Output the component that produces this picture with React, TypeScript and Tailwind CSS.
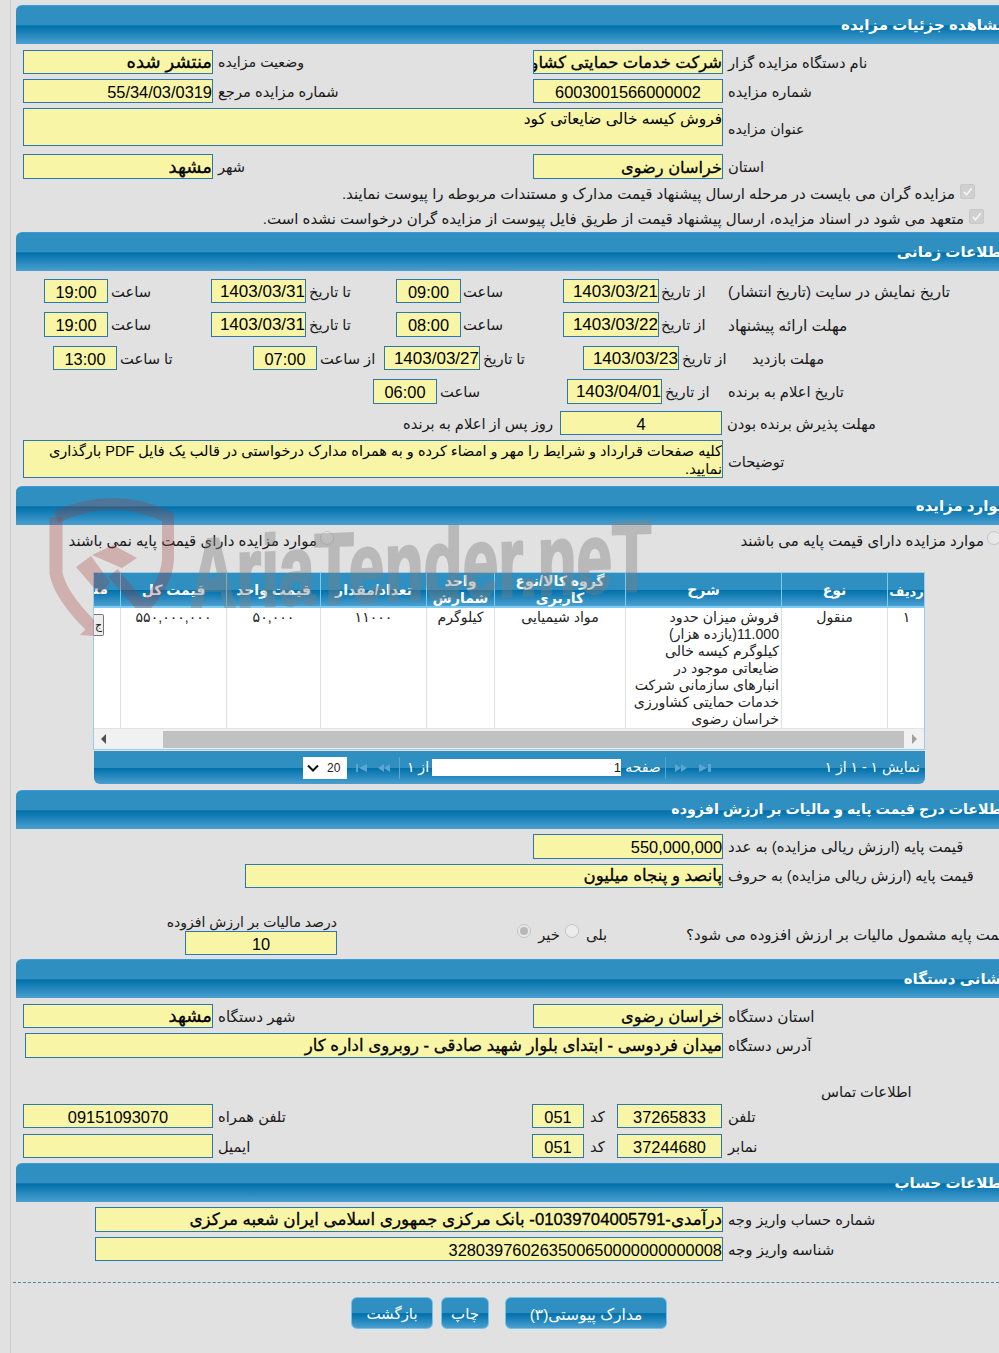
import React from "react";

const grad = "bg-[linear-gradient(#2f8fc0_0%,#2f8fc0_50%,#0070aa_52%,#4a9fd0_100%)]";
const thick = "[-webkit-text-stroke:0.3px_#000] !pt-0";

function Box({ className = "", children, top = false, center = false }: { className?: string; children?: React.ReactNode; top?: boolean; center?: boolean }) {
  return (
    <div dir="rtl" className={`shrink-0 border border-[#2a78ae] bg-[#f8f6a6] text-black text-[16.4px] leading-[22px] pt-[1px] overflow-hidden whitespace-nowrap ${center ? "text-center" : "text-right"} ${top ? "" : "flex items-center " + (center ? "justify-center" : "")} ${className}`}>
      {children}
    </div>
  );
}

function Lab({ className = "", children }: { className?: string; children?: React.ReactNode }) {
  return (
    <div className={`shrink-0 text-left text-[14.7px] text-[#1a1a1a] whitespace-nowrap pt-[2px] ${className}`}>
      <span dir="rtl" className="inline-block">{children}</span>
    </div>
  );
}

function Row({ className = "", children }: { className?: string; children?: React.ReactNode }) {
  return <div className={`flex items-center ${className}`}>{children}</div>;
}

function Head({ title, className = "" }: { title: string; className?: string }) {
  return (
    <div dir="rtl" className={`relative h-[39px] ml-[5px] -mr-[8px] rounded-tl-[6px] border-t border-[#3b9ade] ${grad} text-white font-bold text-[15px] leading-[37px] whitespace-nowrap overflow-hidden ${className}`}>
      {title}
    </div>
  );
}

function Tick({ className = "" }: { className?: string }) {
  return (
    <span className={`inline-flex w-[15px] h-[15px] rounded-[2px] bg-[#d0d0d0] border border-[#c8c8c8] items-center justify-center ${className}`}>
      <svg viewBox="0 0 12 12" className="w-[11px] h-[11px]"><path d="M2 6.5 L5 9.5 L10.5 2.5" stroke="#f4f4f4" strokeWidth="2" fill="none" /></svg>
    </span>
  );
}

function Radio({ className = "", dot = false }: { className?: string; dot?: boolean }) {
  return (
    <span className={`inline-flex shrink-0 w-[14px] h-[14px] rounded-full border border-[#c4c4c4] bg-[#e8e8e8] items-center justify-center ${className}`}>
      {dot && <span className="w-[8px] h-[8px] rounded-full bg-[#b8b8b8]" />}
    </span>
  );
}

function Watermark() {
  return (
    <div className="absolute left-[29px] top-[495px] w-[640px] h-[150px] z-10 pointer-events-none">
      <svg viewBox="0 0 150 150" className="absolute left-0 top-0 w-[150px] h-[150px]">
        <path d="M16 22 Q73 -4 128 22 L128 65 Q126 90 103 113 L73 78" fill="none" stroke="#9a3a3a" strokeOpacity="0.3" strokeWidth="12" />
        <path d="M16 22 L16 78 Q20 100 50 130" fill="none" stroke="#a83a3a" strokeOpacity="0.3" strokeWidth="13" />
        <path d="M40 140 L67 142 L62 117 Z" fill="#a83a3a" fillOpacity="0.3" />
        <path d="M36 72 L51 61 L70 87 L60 100 Z" fill="#a83a3a" fillOpacity="0.3" />
        <path d="M52 60 L73 50 L97 63 L82 73 Z" fill="#a83a3a" fillOpacity="0.3" />
      </svg>
      <div className="absolute left-[150px] top-[24px] text-[100px] leading-[110px] font-bold text-[#808080] opacity-40 whitespace-nowrap origin-left [-webkit-text-stroke:3px_#808080] [transform:scaleX(.64)_skewY(-1.5deg)] [font-family:'Liberation_Sans',sans-serif]">
        AriaTender.neT
      </div>
    </div>
  );
}

const cols = ["w-[27px]", "w-[106px]", "w-[94px]", "w-[106px]", "w-[68px]", "w-[131px]", "w-[156px]", "w-[106px]", "w-[37px]"];
const heads = ["مشاهده", "قیمت کل", "قیمت واحد", "تعداد/مقدار", "واحد شمارش", "گروه کالا/نوع کاربری", "شرح", "نوع", "ردیف"];
const desc = ["فروش میزان حدود", "11.000(یازده هزار)", "کیلوگرم کیسه خالی", "ضایعاتی موجود در", "انبارهای سازمانی شرکت", "خدمات حمایتی کشاورزی", "خراسان رضوی"];

function Table() {
  return (
    <div className="relative ml-[82px] w-[832px] mt-[20px] border border-[#9ccbe8] border-b-0">
      <div className={`flex h-[35px] ${grad} border-b-2 border-[#7ccbf0]`}>
        {heads.map((h, i) => (
          <div key={i} dir="rtl" className={`${cols[i]} shrink-0 ${i < 8 ? "border-r border-[#7ccbf0]" : ""} flex items-center text-white font-bold leading-[17px] ${i === 0 ? "justify-start pr-[12px] whitespace-nowrap overflow-hidden text-[14px]" : i === 8 ? "justify-center pt-[3px] text-[13px]" : "justify-center text-center pt-[1px] text-[14px]"}`}>
            {h}
          </div>
        ))}
      </div>
      <div className="relative z-20 flex h-[120px] bg-white text-[14.1px] leading-[17px] text-[#222] text-center">
        <div className={`${cols[0]} shrink-0 border-r border-[#dfdfdf] pt-[6px]`}>
          <span className="block w-[10px] h-[22px] bg-[#eee] border border-[#777] border-l-0 rounded-r-[2px] text-[11px] leading-[20px]">ج</span>
        </div>
        <div dir="rtl" className={`${cols[1]} shrink-0 border-r border-[#dfdfdf] pt-[1px]`}>۵۵۰,۰۰۰,۰۰۰</div>
        <div dir="rtl" className={`${cols[2]} shrink-0 border-r border-[#dfdfdf] pt-[1px]`}>۵۰,۰۰۰</div>
        <div dir="rtl" className={`${cols[3]} shrink-0 border-r border-[#dfdfdf] pt-[1px]`}>۱۱۰۰۰</div>
        <div dir="rtl" className={`${cols[4]} shrink-0 border-r border-[#dfdfdf] pt-[1px]`}>کیلوگرم</div>
        <div dir="rtl" className={`${cols[5]} shrink-0 border-r border-[#dfdfdf] pt-[1px]`}>مواد شیمیایی</div>
        <div dir="rtl" className={`${cols[6]} shrink-0 border-r border-[#dfdfdf] pt-[1px] pr-[2px] text-right whitespace-nowrap`}>
          {desc.map((l) => <div key={l}>{l}</div>)}
        </div>
        <div dir="rtl" className={`${cols[7]} shrink-0 border-r border-[#dfdfdf] pt-[1px]`}>منقول</div>
        <div dir="rtl" className={`${cols[8]} shrink-0 pt-[1px]`}>۱</div>
      </div>
      <div className="relative z-20 h-[22px] bg-[#f1f1f1] border-t border-[#e2e2e2] border-b border-b-[#9ccbe8] flex items-center">
        <span className="ml-[7px] w-0 h-0 border-y-[5px] border-y-transparent border-r-[5px] border-r-[#505050]" />
        <div className="ml-[57px] w-[741px] h-[17px] bg-[#c1c1c1]" />
        <span className="ml-[8px] w-0 h-0 border-y-[5px] border-y-transparent border-l-[5px] border-l-[#a0a0a0]" />
      </div>
    </div>
  );
}

function PagerIcon({ d }: { d: string }) {
  return (
    <svg viewBox="0 0 14 10" className="w-[14px] h-[10px]"><path d={d} fill="#5ba5cf" /></svg>
  );
}

function Pager() {
  return (
    <div className={`relative ml-[83px] w-[831px] h-[33px] mt-[1px] rounded-b-[6px] ${grad} flex items-center text-white text-[14px]`}>
      <div className="ml-[209px] w-[44px] h-[22px] bg-white flex items-center text-[#222] text-[12px]">
        <svg viewBox="0 0 12 8" className="ml-[4px] w-[12px] h-[8px]"><path d="M1 1.5 L6 6.5 L11 1.5" stroke="#111" strokeWidth="2" fill="none" /></svg>
        <span className="ml-[8px]">20</span>
      </div>
      <div className="ml-[8px] flex gap-[8px] items-center">
        <PagerIcon d="M1 1 H3 V9 H1 Z M12 1 V9 L4 5 Z" />
        <PagerIcon d="M7 1 V9 L1 5 Z M13 1 V9 L7 5 Z" />
      </div>
      <div className="ml-[8px] w-px h-[22px] bg-[#5ba5cf]" />
      <span dir="rtl" className="ml-[6px] w-[24px] text-center">از ۱</span>
      <div className="ml-[2px] w-[189px] h-[17px] bg-white text-[#222] text-right text-[13px] leading-[17px]">1</div>
      <span dir="rtl" className="ml-[4px] w-[36px] text-center">صفحه</span>
      <div className="ml-[4px] w-px h-[22px] bg-[#5ba5cf]" />
      <div className="ml-[8px] flex gap-[10px] items-center">
        <PagerIcon d="M1 1 V9 L7 5 Z M7 1 V9 L13 5 Z" />
        <PagerIcon d="M1 1 V9 L9 5 Z M10 1 H13 V9 H10 Z" />
      </div>
      <span dir="rtl" className="ml-auto mr-[5px]">نمایش ۱ - ۱ از ۱</span>
    </div>
  );
}

function Btn({ className = "", children }: { className?: string; children?: React.ReactNode }) {
  return (
    <button dir="rtl" className={`h-[32px] pt-[3px] rounded-[6px] border border-[#6fc3ec] ${grad} text-white text-[15px] ${className}`}>{children}</button>
  );
}

export default function App() {
  return (
    <div className="relative w-[999px] h-[1353px] overflow-hidden bg-[#e1e1e1] [font-family:'Liberation_Sans','DejaVu_Sans',sans-serif]">
      <div className="relative ml-[10px] h-full border-l border-[#cccccc] pt-[5px]">
        <Watermark />
        <Head title="مشاهده جزئیات مزایده" />
        <Row className="mt-[6px] h-[24px]">
          <Box className={`ml-[12px] w-[190px] h-[24px] ${thick} !text-[18px]`}>منتشر شده</Box>
          <Lab className="w-[320px] pl-[5px] !text-[14.2px]">وضعیت مزایده</Lab>
          <Box className={`w-[190px] h-[24px] ${thick}`}>شرکت خدمات حمایتی کشاورزی خراسان رضوی</Box>
          <Lab className="pl-[5px]">نام دستگاه مزایده گزار</Lab>
        </Row>
        <Row className="mt-[5px] h-[24px]">
          <Box className="ml-[12px] w-[190px] h-[24px]">55/34/03/0319</Box>
          <Lab className="w-[320px] pl-[5px]">شماره مزایده مرجع</Lab>
          <Box center className="w-[190px] h-[24px]">6003001566000002</Box>
          <Lab className="pl-[5px]">شماره مزایده</Lab>
        </Row>
        <Row className="mt-[5px] h-[38px]">
          <Box top className="ml-[12px] w-[700px] h-[38px] !text-[15.4px] !leading-[20px] !pt-0">فروش کیسه خالی ضایعاتی کود</Box>
          <Lab className="pl-[5px] !pt-[6px] !text-[14.2px]">عنوان مزایده</Lab>
        </Row>
        <Row className="mt-[8px] h-[25px]">
          <Box className={`ml-[12px] w-[190px] h-[25px] ${thick} !text-[18px]`}>مشهد</Box>
          <Lab className="w-[320px] pl-[5px]">شهر</Lab>
          <Box className={`w-[190px] h-[25px] ${thick} !text-[16.2px]`}>خراسان رضوی</Box>
          <Lab className="pl-[5px]">استان</Lab>
        </Row>
        <div dir="rtl" className="mt-[2px] h-[26px] mr-[24px] flex items-center gap-[5px] text-[15px] text-[#1a1a1a] whitespace-nowrap">
          <Tick className="-mt-[6px]" />
          <span>مزایده گران می بایست در مرحله ارسال پیشنهاد قیمت مدارک و مستندات مربوطه را پیوست نمایند.</span>
        </div>
        <div dir="rtl" className="h-[25px] mr-[15px] flex items-center gap-[5px] text-[15px] text-[#1a1a1a] whitespace-nowrap">
          <Tick className="-mt-[6px]" />
          <span>متعهد می شود در اسناد مزایده، ارسال پیشنهاد قیمت از طریق فایل پیوست از مزایده گران درخواست نشده است.</span>
        </div>

        <Head title="اطلاعات زمانی" />
        <Row className="mt-[8px] h-[24px]">
          <Box center className="ml-[33px] w-[64px] h-[24px]">19:00</Box>
          <Lab className="w-[103px] pl-[3px]">ساعت</Lab>
          <Box className="w-[95px] h-[24px] !text-[17px]">1403/03/31</Box>
          <Lab className="w-[90px] pl-[3px]">تا تاریخ</Lab>
          <Box center className="w-[65px] h-[24px]">09:00</Box>
          <Lab className="w-[102px] pl-[2px]">ساعت</Lab>
          <Box className="w-[96px] h-[24px] !text-[17px]">1403/03/21</Box>
          <Lab className="w-[69px] pl-[2px]">از تاریخ</Lab>
          <Lab className="!text-[15.2px]">تاریخ نمایش در سایت (تاریخ انتشار)</Lab>
        </Row>
        <Row className="mt-[9px] h-[25px]">
          <Box center className="ml-[33px] w-[64px] h-[25px]">19:00</Box>
          <Lab className="w-[103px] pl-[3px]">ساعت</Lab>
          <Box className="w-[95px] h-[25px] !text-[17px]">1403/03/31</Box>
          <Lab className="w-[90px] pl-[3px]">تا تاریخ</Lab>
          <Box center className="w-[65px] h-[25px]">08:00</Box>
          <Lab className="w-[102px] pl-[2px]">ساعت</Lab>
          <Box className="w-[96px] h-[25px] !text-[17px]">1403/03/22</Box>
          <Lab className="w-[69px] pl-[2px]">از تاریخ</Lab>
          <Lab className="!text-[15.5px]">مهلت ارائه پیشنهاد</Lab>
        </Row>
        <Row className="mt-[9px] h-[24px]">
          <Box center className="ml-[42px] w-[64px] h-[24px]">13:00</Box>
          <Lab className="w-[136px] pl-[3px]">تا ساعت</Lab>
          <Box center className="w-[64px] h-[24px]">07:00</Box>
          <Lab className="w-[67px] pl-[3px]">از ساعت</Lab>
          <Box className="w-[96px] h-[24px] !text-[17px]">1403/03/27</Box>
          <Lab className="w-[103px] pl-[3px]">تا تاریخ</Lab>
          <Box className="w-[96px] h-[24px] !text-[17px]">1403/03/23</Box>
          <Lab className="w-[73px] pl-[3px]">از تاریخ</Lab>
          <Lab>مهلت بازدید</Lab>
        </Row>
        <Row className="mt-[9px] h-[25px]">
          <Box center className="ml-[362px] w-[64px] h-[25px]">06:00</Box>
          <Lab className="w-[130px] pl-[3px]">ساعت</Lab>
          <Box className="w-[95px] h-[25px] !text-[17px]">1403/04/01</Box>
          <Lab className="w-[66px] pl-[3px]">از تاریخ</Lab>
          <Lab>تاریخ اعلام به برنده</Lab>
        </Row>
        <Row className="mt-[7px] h-[24px]">
          <Lab className="ml-[392px] w-[157px]">روز پس از اعلام به برنده</Lab>
          <Box center className="w-[162px] h-[24px]">4</Box>
          <Lab className="pl-[5px]">مهلت پذیرش برنده بودن</Lab>
        </Row>
        <Row className="mt-[5px] h-[38px]">
          <Box top className="ml-[12px] w-[700px] h-[38px] !text-[14.5px] !leading-[18px] !whitespace-normal">کلیه صفحات قرارداد و شرایط را مهر و امضاء کرده و به همراه مدارک درخواستی در قالب یک فایل PDF بارگذاری نمایید.</Box>
          <Lab className="pl-[5px] !pt-[6px]">توضیحات</Lab>
        </Row>

        <Head title="موارد مزایده" className="mt-[8px]" />
        <div className="flex h-[22px] mt-[5px] text-[15px] text-[#1a1a1a] whitespace-nowrap">
          <div dir="rtl" className="w-[323px] flex items-center gap-[3px]">
            <Radio className="-mt-[6px]" />
            <span>موارد مزایده دارای قیمت پایه نمی باشند</span>
          </div>
          <div dir="rtl" className="flex-1 -mr-[2px] flex items-center gap-[3px]">
            <Radio className="-mt-[6px]" />
            <span>موارد مزایده دارای قیمت پایه می باشند</span>
          </div>
        </div>
        <Table />
        <Pager />

        <Head title="اطلاعات درج قیمت پایه و مالیات بر ارزش افزوده" className="mt-[6px] !text-[14.2px]" />
        <Row className="mt-[5px] h-[25px]">
          <Box className="ml-[522px] w-[190px] h-[25px]">550,000,000</Box>
          <Lab className="pl-[5px] !text-[14.9px]">قیمت پایه (ارزش ریالی مزایده) به عدد</Lab>
        </Row>
        <Row className="mt-[5px] h-[24px]">
          <Box className={`ml-[234px] w-[478px] h-[24px] ${thick} !text-[16.6px]`}>پانصد و پنجاه میلیون</Box>
          <Lab className="pl-[5px] !text-[14.5px]">قیمت پایه (ارزش ریالی مزایده) به حروف</Lab>
        </Row>
        <div className="flex mt-[26px] h-[40px]">
          <div className="ml-[158px] w-[168px] flex flex-col items-end">
            <span dir="rtl" className="text-[14px] leading-[17px] text-[#1a1a1a] whitespace-nowrap">درصد مالیات بر ارزش افزوده</span>
            <Box center className="w-[152px] h-[24px]">10</Box>
          </div>
          <div className="ml-[180px] w-[169px] shrink-0 mt-[10px] flex items-start gap-[4px] text-[14.7px] text-[#1a1a1a]">
            <Radio dot />
            <span dir="rtl" className="w-[24px] text-center ml-[2px]">خیر</span>
            <Radio className="bg-[#ececec]" />
            <span dir="rtl" className="ml-[3px]">بلی</span>
          </div>
          <Lab className="mt-[8px] !text-[15px]">قیمت پایه مشمول مالیات بر ارزش افزوده می شود؟</Lab>
        </div>

        <Head title="نشانی دستگاه" className="mt-[5px]" />
        <Row className="mt-[6px] h-[24px]">
          <Box className={`ml-[12px] w-[190px] h-[24px] ${thick} !text-[18px]`}>مشهد</Box>
          <Lab className="w-[320px] pl-[5px] !text-[15.2px]">شهر دستگاه</Lab>
          <Box className={`w-[190px] h-[24px] ${thick} !text-[16.2px]`}>خراسان رضوی</Box>
          <Lab className="pl-[5px] !text-[15.2px]">استان دستگاه</Lab>
        </Row>
        <Row className="mt-[5px] h-[25px]">
          <Box className={`ml-[14px] w-[698px] h-[25px] ${thick} !text-[16.6px]`}>میدان فردوسی - ابتدای بلوار شهید صادقی - روبروی اداره کار</Box>
          <Lab className="pl-[5px]">آدرس دستگاه</Lab>
        </Row>
        <div dir="rtl" className="mt-[23px] h-[20px] text-left pl-[810px] text-[14.7px] text-[#1a1a1a] whitespace-nowrap">اطلاعات تماس</div>
        <Row className="mt-[3px] h-[24px]">
          <Box center className="ml-[12px] w-[190px] h-[24px]">09151093070</Box>
          <Lab className="w-[319px] pl-[5px]">تلفن همراه</Lab>
          <Box center className="w-[52px] h-[24px]">051</Box>
          <Lab className="w-[33px] pl-[6px]">کد</Lab>
          <Box center className="w-[105px] h-[24px]">37265833</Box>
          <Lab className="pl-[6px]">تلفن</Lab>
        </Row>
        <Row className="mt-[6px] h-[24px]">
          <Box className="ml-[12px] w-[190px] h-[24px]" />
          <Lab className="w-[319px] pl-[5px]">ایمیل</Lab>
          <Box center className="w-[52px] h-[24px]">051</Box>
          <Lab className="w-[33px] pl-[6px]">کد</Lab>
          <Box center className="w-[105px] h-[24px]">37244680</Box>
          <Lab className="pl-[6px]">نمابر</Lab>
        </Row>

        <Head title="اطلاعات حساب" className="mt-[5px]" />
        <Row className="mt-[5px] h-[25px]">
          <Box className={`ml-[84px] w-[628px] h-[25px] ${thick} !text-[16.75px]`}>درآمدی-01039704005791- بانک مرکزی جمهوری اسلامی ایران شعبه مرکزی</Box>
          <Lab className="pl-[5px]">شماره حساب واریز وجه</Lab>
        </Row>
        <Row className="mt-[5px] h-[24px]">
          <Box className="ml-[84px] w-[628px] h-[24px]">328039760263500650000000000008</Box>
          <Lab className="pl-[5px] !text-[15px]">شناسه واریز وجه</Lab>
        </Row>
        <div className="mt-[21px] ml-[2px] border-t border-dashed border-[#4a88a8]" />
        <div className="mt-[14px] ml-[340px] flex gap-[8px]">
          <Btn className="w-[82px]">بازگشت</Btn>
          <Btn className="w-[48px]">چاپ</Btn>
          <Btn className="w-[162px] ml-[8px] !text-[15.5px]">مدارک پیوستی(۳)</Btn>
        </div>
      </div>
    </div>
  );
}
